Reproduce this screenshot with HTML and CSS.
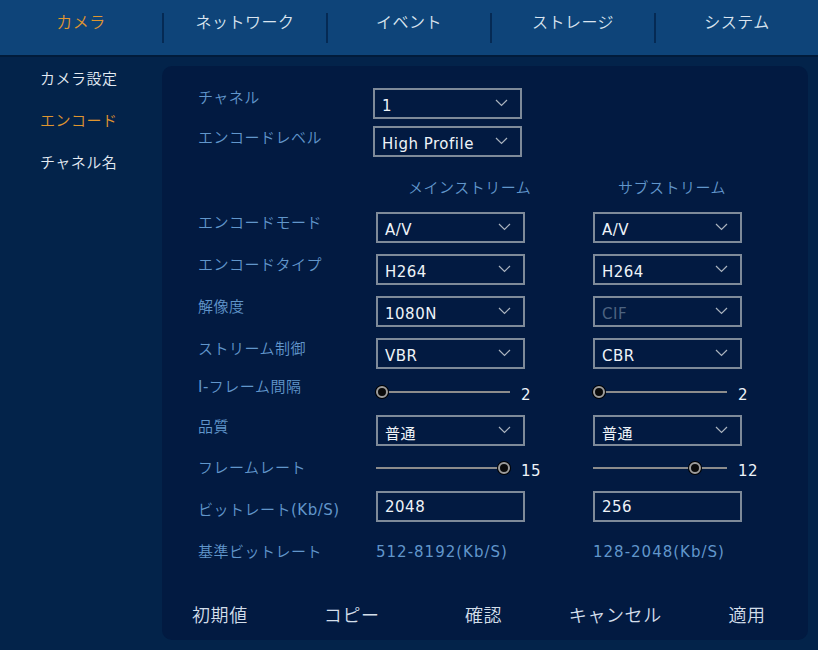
FILE: index.html
```html
<!DOCTYPE html>
<html lang="ja">
<head>
    <meta charset="utf-8">
    <title>エンコード設定</title>
    <link rel="stylesheet" href="styles.css">
</head>
<body>
<div class="topbar">
    <div class="tab active">カメラ</div>
    <div class="tab">ネットワーク</div>
    <div class="tab">イベント</div>
    <div class="tab">ストレージ</div>
    <div class="tab last">システム</div>
</div>

<div class="main">
    <ul class="side">
        <li>カメラ設定</li>
        <li class="active">エンコード</li>
        <li>チャネル名</li>
    </ul>

    <div class="panel">
        <!-- チャネル / エンコードレベル -->
        <div class="head-rows">
            <div class="row r1">
                <span class="label">チャネル</span>
                <div class="select">1<svg class="chev" width="13" height="8" viewBox="0 0 13 8"><polyline points="1,1 6.5,6.5 12,1"/></svg></div>
            </div>
            <div class="row r2">
                <span class="label">エンコードレベル</span>
                <div class="select">High Profile<svg class="chev" width="13" height="8" viewBox="0 0 13 8"><polyline points="1,1 6.5,6.5 12,1"/></svg></div>
            </div>
        </div>

        <div class="grid">
            <div class="row caption">
                <span></span>
                <span class="col-title main-t">メインストリーム</span>
                <span></span>
                <span class="col-title sub-t">サブストリーム</span>
            </div>

            <div class="row r-sel">
                <span class="label">エンコードモード</span>
                <div class="select">A/V<svg class="chev" width="13" height="8" viewBox="0 0 13 8"><polyline points="1,1 6.5,6.5 12,1"/></svg></div>
                <span></span>
                <div class="select">A/V<svg class="chev" width="13" height="8" viewBox="0 0 13 8"><polyline points="1,1 6.5,6.5 12,1"/></svg></div>
            </div>
            <div class="row r-sel">
                <span class="label">エンコードタイプ</span>
                <div class="select">H264<svg class="chev" width="13" height="8" viewBox="0 0 13 8"><polyline points="1,1 6.5,6.5 12,1"/></svg></div>
                <span></span>
                <div class="select">H264<svg class="chev" width="13" height="8" viewBox="0 0 13 8"><polyline points="1,1 6.5,6.5 12,1"/></svg></div>
            </div>
            <div class="row r-sel">
                <span class="label">解像度</span>
                <div class="select">1080N<svg class="chev" width="13" height="8" viewBox="0 0 13 8"><polyline points="1,1 6.5,6.5 12,1"/></svg></div>
                <span></span>
                <div class="select disabled">CIF<svg class="chev" width="13" height="8" viewBox="0 0 13 8"><polyline points="1,1 6.5,6.5 12,1"/></svg></div>
            </div>
            <div class="row r-sel short">
                <span class="label">ストリーム制御</span>
                <div class="select">VBR<svg class="chev" width="13" height="8" viewBox="0 0 13 8"><polyline points="1,1 6.5,6.5 12,1"/></svg></div>
                <span></span>
                <div class="select">CBR<svg class="chev" width="13" height="8" viewBox="0 0 13 8"><polyline points="1,1 6.5,6.5 12,1"/></svg></div>
            </div>
            <div class="row r-slide">
                <span class="label"><span class="latin">I-</span>フレーム間隔</span>
                <div class="slider"><div class="track"><span class="knob" style="left: 0px"></span></div><span class="val">2</span></div>
                <span></span>
                <div class="slider"><div class="track"><span class="knob" style="left: 0px"></span></div><span class="val">2</span></div>
            </div>
            <div class="row r-sel quality">
                <span class="label">品質</span>
                <div class="select">普通<svg class="chev" width="13" height="8" viewBox="0 0 13 8"><polyline points="1,1 6.5,6.5 12,1"/></svg></div>
                <span></span>
                <div class="select">普通<svg class="chev" width="13" height="8" viewBox="0 0 13 8"><polyline points="1,1 6.5,6.5 12,1"/></svg></div>
            </div>
            <div class="row r-slide fps">
                <span class="label">フレームレート</span>
                <div class="slider"><div class="track"><span class="knob" style="left: 122px"></span></div><span class="val">15</span></div>
                <span></span>
                <div class="slider"><div class="track"><span class="knob" style="left: 96px"></span></div><span class="val">12</span></div>
            </div>
            <div class="row r-input">
                <span class="label">ビットレート<span class="latin">(Kb/S)</span></span>
                <div class="input">2048</div>
                <span></span>
                <div class="input">256</div>
            </div>
            <div class="row r-text">
                <span class="label">基準ビットレート</span>
                <span class="range">512-8192(Kb/S)</span>
                <span></span>
                <span class="range">128-2048(Kb/S)</span>
            </div>
        </div>

        <div class="actions">
            <span>初期値</span>
            <span>コピー</span>
            <span>確認</span>
            <span>キャンセル</span>
            <span>適用</span>
        </div>
    </div>
</div>
</body>
</html>
```

FILE: styles.css
```css
body {
    margin: 0;
    width: 818px;
    height: 650px;
    overflow: hidden;
    background-color: #03234a;
    font-family: "DejaVu Sans", "Noto Sans CJK JP", sans-serif;
    font-size: 15px;
    font-weight: 350;
    letter-spacing: 0.5px;
    color: #e4ebf3;
}

/* top tabs */
.topbar {
    display: flex;
    height: 57px;
    padding-top: 15px;
    box-sizing: border-box;
    background-color: #0e4479;
    border-bottom: 2px solid #011b3a;
}
.tab {
    flex: 1;
    height: 28px;
    margin-top: -2px;
    padding-top: 2px;
    line-height: 16px;
    font-size: 16px;
    text-align: center;
    color: #dae4ef;
    border-right: 2px solid #052a54;
}
.tab.last {
    border-right: none;
}
.tab.active {
    color: #e0962f;
}

/* main */
.main {
    display: flex;
    height: 593px;
}
.side {
    width: 162px;
    margin: 0;
    padding: 12px 0 0 40px;
    box-sizing: border-box;
    list-style: none;
}
.side li {
    height: 42px;
    line-height: 20px;
    color: #e4ebf3;
}
.side li.active {
    color: #e0962f;
}

.panel {
    display: flex;
    flex-direction: column;
    width: 646px;
    margin: 9px 10px 10px 0;
    padding: 22px 0 0 36px;
    box-sizing: border-box;
    background-color: #021a41;
    border-radius: 10px;
}

.row {
    display: grid;
    align-items: start;
}
.label {
    line-height: 20px;
    color: #6196cb;
    white-space: nowrap;
}
.latin {
    font-weight: 400;
}

.head-rows .row {
    grid-template-columns: 175px 149px;
}
.head-rows .r1 {
    height: 38px;
}
.head-rows .r2 {
    height: 31px;
}
.head-rows .r2 .label {
    padding-top: 2px;
}

.grid .row {
    grid-template-columns: 178px 149px 68px 149px;
}
.caption {
    height: 55px;
    padding-top: 21px;
    box-sizing: border-box;
}
.col-title {
    line-height: 20px;
    color: #6196cb;
    white-space: nowrap;
}
.main-t {
    padding-left: 32px;
}
.sub-t {
    padding-left: 25px;
}

.r-sel {
    height: 42px;
}
.r-sel .label {
    padding-top: 1px;
}
.r-sel.short {
    height: 39px;
}
.r-sel.quality {
    height: 38px;
}
.r-sel.quality .label {
    padding-top: 2px;
}
.r-slide {
    height: 38px;
}
.r-slide.fps {
    height: 36px;
}
.r-slide.fps .label {
    padding-top: 5px;
}
.r-input {
    height: 41px;
}
.r-input .label {
    padding-top: 11px;
}
.r-text .label,
.r-text .range {
    padding-top: 12px;
}

/* controls */
.select,
.input {
    display: flex;
    align-items: center;
    height: 31px;
    padding: 4px 12px 0 7px;
    box-sizing: border-box;
    border: 2px solid #7e8a99;
    font-weight: 400;
    color: #eef3f8;
    white-space: nowrap;
}
.select {
    justify-content: space-between;
}
.input {
    margin-top: 2px;
    padding-top: 0;
}
.select.disabled {
    color: #4d6380;
}
.chev {
    margin-top: -5px;
    fill: none;
    stroke: #aab3be;
    stroke-width: 1.2;
}

.slider {
    display: flex;
    align-items: center;
    height: 30px;
}
.track {
    position: relative;
    width: 134px;
    height: 30px;
    flex: none;
}
.track::before {
    content: "";
    position: absolute;
    left: 0;
    right: 0;
    top: 14px;
    height: 2px;
    background-color: #8c8c8c;
}
.knob {
    position: absolute;
    top: 9px;
    width: 12px;
    height: 12px;
    box-sizing: border-box;
    border: 2px solid #9c9c9c;
    border-radius: 50%;
    background-color: #0a0a0a;
    box-shadow: 0 0 0 1px #000;
}
.val {
    margin-left: 11px;
    padding-top: 5px;
    line-height: 20px;
    font-weight: 400;
    color: #eef3f8;
}

.range {
    line-height: 20px;
    font-weight: 400;
    letter-spacing: 1px;
    color: #6196cb;
    white-space: nowrap;
}

/* bottom buttons */
.actions {
    display: grid;
    grid-template-columns: repeat(5, 1fr);
    margin: auto -5px 0 -44px;
    height: 52px;
    align-items: center;
    font-size: 18px;
    letter-spacing: 0.6px;
    color: #d3deea;
    text-align: center;
}
```
